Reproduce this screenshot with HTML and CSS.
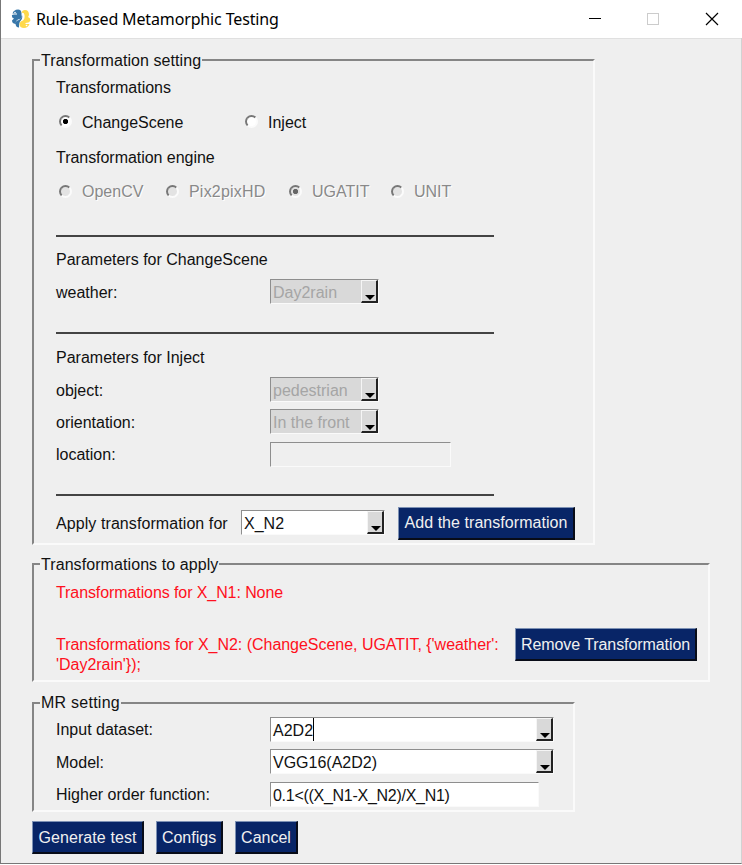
FILE: index.html
```html
<!DOCTYPE html>
<html lang="en">
<head>
<meta charset="utf-8">
<title>Rule-based Metamorphic Testing</title>
<link rel="stylesheet" href="styles.css">
</head>
<body>
<div class="window">
  <header class="titlebar">
    <svg class="logo" width="20" height="20" viewBox="0 0 20 20">
      <path d="M5 .8Q10-.5 10.500 4V7Q10.500 10 7 10.500Q4.500 11.500 4.500 15Q1 14.500 1 11.500L3 9.500Q.5 9 1 6L3 5.500H6V4.500H1.500Q2 2 5 .8ZM4.500 15Q4.500 11.500 8 11Q11 9 11 6Q12 10 9.500 12Q8 13 8 18.500Q5 18.500 4.500 15Z" fill="#3776a8"/>
      <path d="M10.500 4Q11 1 14 1Q18 1 18 6Q17.500 7.500 17 8Q19.800 9 19.300 12Q18 14 14.500 14V15H18.500Q17 19 13 19Q8.500 19 8.500 15Q9 12 12 11.500Q14 10 13.500 6Q13 3 10.500 4Z" fill="#ffd94c"/>
      <circle cx="4" cy="3.500" r=".8" fill="#fff"/><circle cx="15.500" cy="16.500" r=".8" fill="#fff"/>
    </svg>
    <h1 class="title">Rule-based Metamorphic Testing</h1>
    <svg class="controls" width="132" height="14" viewBox="0 0 132 14" fill="none" shape-rendering="crispEdges">
      <path d="M0 6.500H12" stroke="#000"/>
      <rect x="58.500" y="1.500" width="11" height="11" stroke="#ccc"/>
      <path d="M117 1L129 13M129 1L117 13" stroke="#000" stroke-width="1.200" shape-rendering="auto"/>
    </svg>
  </header>

  <main class="content">
    <fieldset class="frame frame-setting">
      <legend><span class="t-setting">Transformation setting</span></legend>
      <div class="row h36">Transformations</div>
      <div class="row h35">
        <label class="option change"><i class="radio on"></i>ChangeScene</label>
        <label class="option"><i class="radio"></i>Inject</label>
      </div>
      <div class="row h35 engine">Transformation engine</div>
      <div class="row h34 disabled">
        <label class="option opencv"><i class="radio"></i>OpenCV</label>
        <label class="option pix"><i class="radio"></i><span class="t-pix">Pix2pixHD</span></label>
        <label class="option ugatit"><i class="radio on"></i>UGATIT</label>
        <label class="option"><i class="radio"></i>UNIT</label>
      </div>
      <div class="rule first"></div>
      <div class="row h32">Parameters for ChangeScene</div>
      <div class="row h32"><span class="name">weather:</span><span class="combo small off"><span class="value">Day2rain</span><i class="arrow"></i></span></div>
      <div class="rule second"></div>
      <div class="row h33">Parameters for Inject</div>
      <div class="row h32"><span class="name">object:</span><span class="combo small off"><span class="value">pedestrian</span><i class="arrow"></i></span></div>
      <div class="row h32"><span class="name">orientation:</span><span class="combo small off"><span class="value">In the front</span><i class="arrow"></i></span></div>
      <div class="row h33"><span class="name">location:</span><span class="entry blank"></span></div>
      <div class="rule third"></div>
      <div class="row h34"><span class="apply">Apply transformation for</span><span class="combo target"><span class="value">X_N2</span><i class="arrow"></i></span><button class="btn add">Add the transformation</button></div>
    </fieldset>

    <fieldset class="frame frame-apply">
      <legend><span class="t-apply">Transformations to apply</span></legend>
      <div class="row h36 red none">Transformations for X_N1: None</div>
      <div class="list">
        <p class="red detail">Transformations for X_N2: (ChangeScene, UGATIT, {'weather':<br>'Day2rain'});</p>
        <button class="btn remove">Remove Transformation</button>
      </div>
    </fieldset>

    <fieldset class="frame frame-mr">
      <legend><span class="t-mr">MR setting</span></legend>
      <div class="row h33 top"><span class="name">Input dataset:</span><span class="combo long"><span class="value caret">A2D2</span><i class="arrow"></i></span></div>
      <div class="row h32"><span class="name">Model:</span><span class="combo long"><span class="value">VGG16(A2D2)</span><i class="arrow"></i></span></div>
      <div class="row h33"><span class="name">Higher order function:</span><span class="entry func">0.1&lt;((X_N1-X_N2)/X_N1)</span></div>
    </fieldset>

    <div class="actions">
      <button class="btn generate">Generate test</button>
      <button class="btn configs">Configs</button>
      <button class="btn cancel">Cancel</button>
    </div>
  </main>
</div>
</body>
</html>
```

FILE: styles.css
```css
* { box-sizing: border-box; }
body { margin: 0; background: #fff; font: 16px/20px "Liberation Sans", Arial, sans-serif; color: #111; }
.window { width: 742px; height: 864px; background: #efefef; border-left: 1px solid #777; border-right: 1px solid #d2d2d2; border-bottom: 1px solid #777; }
.titlebar { display: flex; align-items: center; height: 38px; background: #fff; padding-left: 10px; margin-right: -1px; }
.logo { flex: none; margin-top: -1px; }
.title { margin: -1px 0 0 5px; width: 553px; font: 16px/20px "Noto Sans", sans-serif; letter-spacing: -0.14px; color: #000; white-space: nowrap; }
.controls { flex: none; }
.content { padding: 12px 0 0 31px; border-top: 1px solid #e0e0e0; height: 825px; }

.frame { margin: 0; padding: 0 0 0 22px; min-width: 0; border: 2px solid #858585; border-right-color: #fafafa; border-bottom-color: #fafafa; }
.frame legend { height: 19px; padding: 0 1px; margin-left: -16px; line-height: 21px; white-space: nowrap; }
.frame legend span { display: block; }
.t-setting { letter-spacing: 0.07px; }
.t-apply { letter-spacing: 0.08px; }
.frame legend .t-mr { letter-spacing: 0.25px; margin-top: -1px; }
.frame-setting { width: 563px; height: 495px; margin-top: -1px; }
.frame-apply { width: 678px; height: 128px; margin-top: 9px; }
.frame-mr { width: 543px; height: 119px; margin-top: 11px; }

.row { display: flex; align-items: center; white-space: nowrap; }
.h32 { height: 32px; }
.h33 { height: 33px; }
.h34 { height: 34px; }
.h35 { height: 35px; }
.h36 { height: 36px; padding-top: 2px; }
.engine { letter-spacing: -0.04px; }
.rule { width: 438px; height: 2px; background: #444; }
.first { margin: 26px 0 7px; }
.second { margin: 24px 0 7px; }
.third { margin: 23px 0 10px; }

.option { display: flex; align-items: center; padding-left: 3px; }
.change { width: 186px; }
.opencv { width: 107px; }
.pix { width: 123px; }
.t-pix { letter-spacing: 0.2px; }
.ugatit { width: 102px; }
.radio { width: 13px; height: 13px; margin: -2px 10px 0 0; border-radius: 50%; border: 2px solid #777; border-right-color: #fbfbfb; border-bottom-color: #fbfbfb; background: #fff; }
.radio.on { background: radial-gradient(circle, #000 2.2px, #fff 3px); }
.disabled { color: #898989; text-shadow: 1px 1px #fff; }
.disabled .radio { background: #e3e3e3; }
.disabled .radio.on { background: radial-gradient(circle, #666 2.2px, #e3e3e3 3px); }

.name { width: 214px; padding-top: 1px; }
.apply { width: 185px; padding-top: 1px; letter-spacing: 0.08px; }
.combo, .entry { display: flex; height: 25px; margin-top: -1px; background: #fff; border: 1px solid #8e8e8e; border-right-color: #fafafa; border-bottom-color: #fafafa; padding-left: 2px; line-height: 25px; }
.combo { justify-content: space-between; }
.value { height: 23px; }
.small { width: 109px; }
.target { width: 144px; }
.long { width: 284px; }
.off { background: #d9d9d9; color: #a5a5a5; }
.arrow { position: relative; width: 17px; height: 23px; background: #d9d9d9; border: 1px solid #f5f5f5; border-right: 2px solid #222; border-bottom: 2px solid #222; }
.arrow::after { content: ""; position: absolute; left: 3px; top: 14px; border: 5px solid transparent; border-top-color: #000; border-bottom: 0; }
.caret { border-right: 1px solid #000; }
.blank { width: 181px; background: #efefef; }
.func { width: 269px; letter-spacing: -0.28px; }

.btn { height: 33px; padding: 1px 0 0; border: 1px solid #7d91b4; border-right: 2px solid #080c18; border-bottom: 2px solid #080c18; background: #082567; color: #f0f0f0; font: inherit; white-space: nowrap; }
.add { width: 177px; margin-left: 13px; letter-spacing: 0.05px; }
.remove { width: 182px; letter-spacing: -0.08px; }
.red { color: #ff1020; }
.none { letter-spacing: -0.09px; padding-top: 3px; }
.list { display: flex; margin-top: 19px; }
.detail { margin: 0; padding-top: 7px; width: 459px; white-space: nowrap; letter-spacing: -0.03px; }
.top { margin-top: 1px; }
.actions { display: flex; gap: 12px; margin-top: 9px; }
.generate { width: 112px; letter-spacing: 0.08px; }
.configs { width: 67px; }
.cancel { width: 63px; }
```
